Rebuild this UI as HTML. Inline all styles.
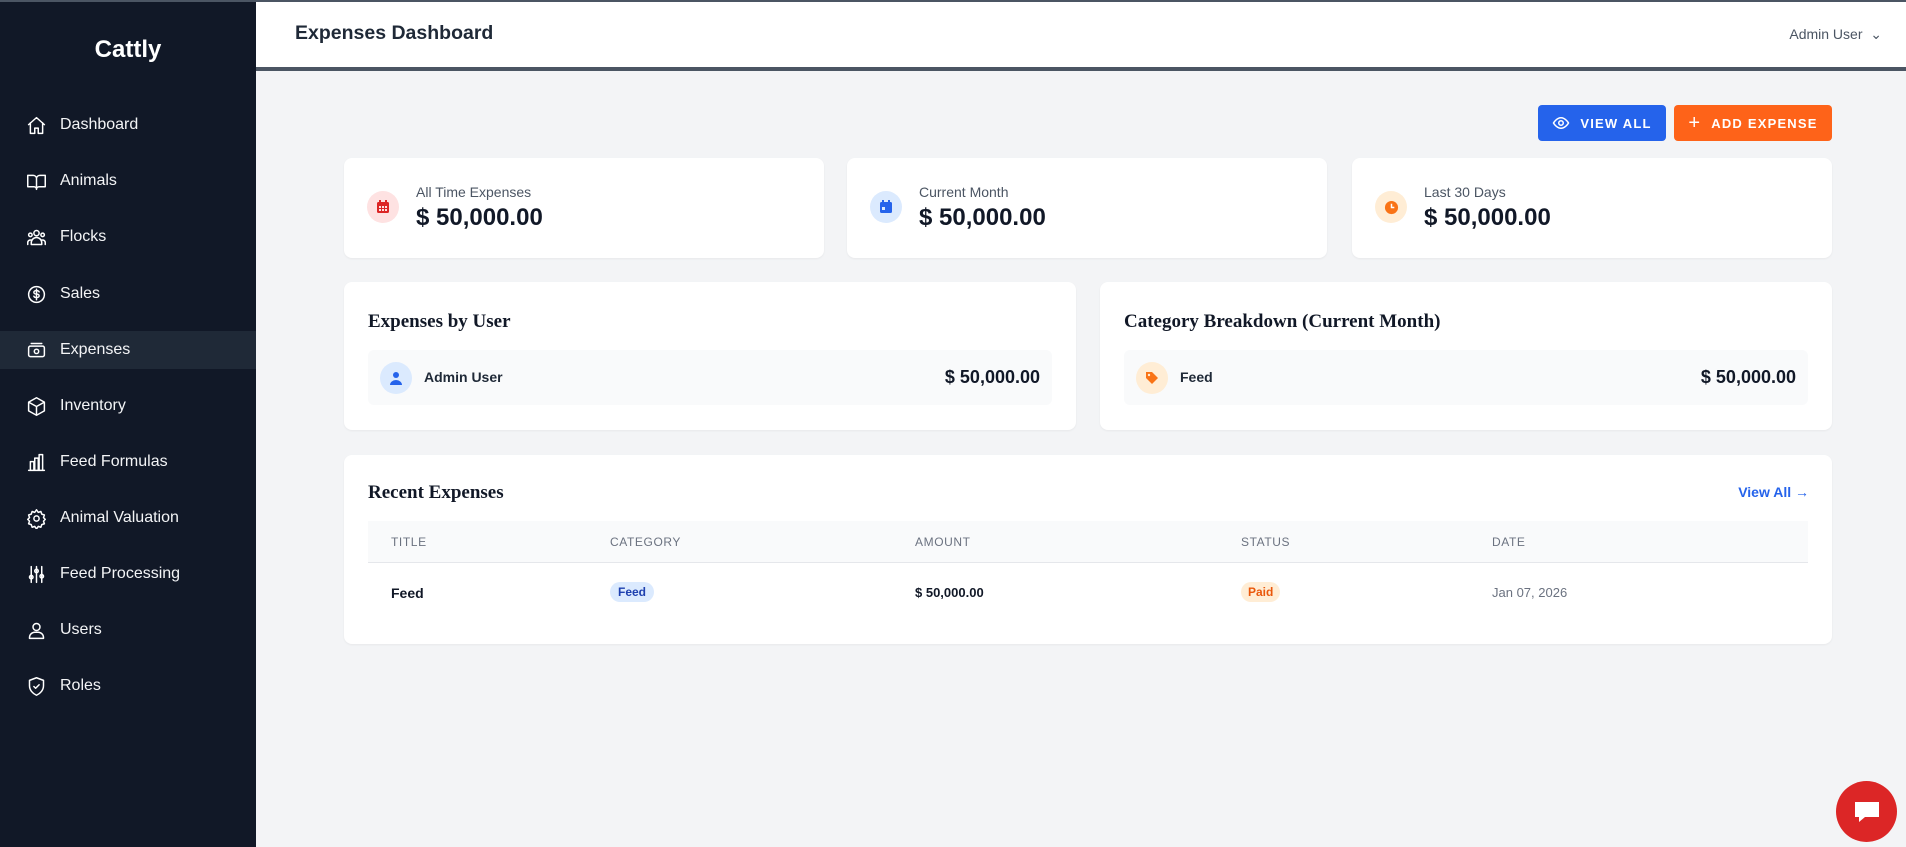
<!DOCTYPE html>
<html><head><meta charset="utf-8"><style>
*{box-sizing:border-box;margin:0;padding:0}
body{width:1906px;height:847px;overflow:hidden;background:#f3f4f6;font-family:"Liberation Sans",sans-serif;position:relative;color:#111827}
.topline{position:absolute;left:0;top:0;width:1906px;height:2px;background:#4b5563;z-index:5}
.side{position:absolute;left:0;top:0;width:256px;height:847px;background:#111827;color:#fff}
.logo{position:absolute;top:36px;width:256px;text-align:center;font-size:24px;font-weight:bold}
.nav{position:absolute;left:0;width:256px;height:38px;display:flex;align-items:center;font-size:16px;color:#f3f4f6}
.nav svg{position:absolute;left:26px;width:21px;height:21px;fill:none;stroke:#fff;stroke-width:1.7;stroke-linecap:round;stroke-linejoin:round}
.nav span{position:absolute;left:60px}
.nav.act{background:#1f2937}
.head{position:absolute;left:256px;top:0;right:0;height:71px;background:#fff;border-bottom:4px solid #4b5563}
.head h1{position:absolute;left:39px;top:22px;font-size:19.5px;font-weight:bold;color:#1f2937}
.user{position:absolute;right:24px;top:26px;font-size:14px;color:#4b5563}
.btn{position:absolute;top:105px;height:36px;border-radius:4px;color:#fff;font-size:13px;font-weight:bold;letter-spacing:1.2px;display:flex;align-items:center;justify-content:center;gap:10px}
.card{position:absolute;background:#fff;border-radius:8px;box-shadow:0 1px 2px rgba(0,0,0,.05)}
.ic{position:absolute;width:32px;height:32px;border-radius:50%;display:flex;align-items:center;justify-content:center}
.lbl{position:absolute;left:72px;top:26px;font-size:14px;color:#4b5563}
.val{position:absolute;left:72px;top:46px;font-size:24px;font-weight:bold}
.ttl{position:absolute;left:24px;top:29px;font-family:"Liberation Serif",serif;font-weight:bold;font-size:19px;color:#111827}
.row{position:absolute;left:24px;right:24px;top:68px;height:55px;background:#f9fafb;border-radius:6px}
.th{position:absolute;top:0;font-size:12px;color:#6b7280;letter-spacing:.6px;line-height:42px}
.td{position:absolute;top:130px;font-size:14px}
</style></head><body>
<div class="topline"></div>
<div class="side">
<div class="logo">Cattly</div>
<div class="nav" style="top:106px"><svg viewBox="0 0 24 24"><path d="M3 11l9-8 9 8M5 9v12h5v-6h4v6h5V9"/></svg><span>Dashboard</span></div>
<div class="nav" style="top:162px"><svg viewBox="0 0 24 24"><path d="M2 5h6a4 4 0 0 1 4 3v13a3 3 0 0 0-3-3H2zM22 5h-6a4 4 0 0 0-4 3v13a3 3 0 0 1 3-3h7z"/></svg><span>Animals</span></div>
<div class="nav" style="top:218px"><svg viewBox="0 0 24 24"><circle cx="12" cy="7" r="3"/><circle cx="5" cy="9" r="2"/><circle cx="19" cy="9" r="2"/><path d="M6 20v-2a6 6 0 0 1 12 0v2zM2 20v-2a3 3 0 0 1 4-3M22 20v-2a3 3 0 0 0-4-3"/></svg><span>Flocks</span></div>
<div class="nav" style="top:275px"><svg viewBox="0 0 24 24"><circle cx="12" cy="12" r="9"/><path d="M15 9a3 2 0 0 0-3-1.5c-2 0-3 1-3 2s1 2 3 2 3 1 3 2-1 2-3 2a3 2 0 0 1-3-1.5M12 6v12"/></svg><span>Sales</span></div>
<div class="nav act" style="top:331px"><svg viewBox="0 0 24 24"><rect x="3" y="7" width="18" height="12" rx="2"/><circle cx="12" cy="13" r="2.5"/><path d="M6 4h12"/></svg><span>Expenses</span></div>
<div class="nav" style="top:387px"><svg viewBox="0 0 24 24"><path d="M12 2l9 5v10l-9 5-9-5V7zM3 7l9 5 9-5M12 12v10"/></svg><span>Inventory</span></div>
<div class="nav" style="top:443px"><svg viewBox="0 0 24 24"><path d="M3 21h18M5 21V11h4v10M10 21V7h4v14M15 21V3h4v18"/></svg><span>Feed Formulas</span></div>
<div class="nav" style="top:499px"><svg viewBox="0 0 24 24"><circle cx="12" cy="12" r="3"/><path d="M12 2l2 3 3-1 1 3 3 1-1 3 2 2-2 2 1 3-3 1-1 3-3-1-2 3-2-3-3 1-1-3-3-1 1-3-2-2 2-2-1-3 3-1 1-3 3 1z"/></svg><span>Animal Valuation</span></div>
<div class="nav" style="top:555px"><svg viewBox="0 0 24 24"><path d="M6 3v18M12 3v18M18 3v18"/><circle cx="6" cy="15" r="2"/><circle cx="12" cy="8" r="2"/><circle cx="18" cy="14" r="2"/></svg><span>Feed Processing</span></div>
<div class="nav" style="top:611px"><svg viewBox="0 0 24 24"><circle cx="12" cy="8" r="4"/><path d="M4 21v-1a6 6 0 0 1 6-6h4a6 6 0 0 1 6 6v1z"/></svg><span>Users</span></div>
<div class="nav" style="top:667px"><svg viewBox="0 0 24 24"><path d="M12 2l8 3v6c0 5-3.5 9-8 11-4.5-2-8-6-8-11V5z"/><path d="M9 12l2 2 4-4"/></svg><span>Roles</span></div>
</div>
<div class="head"><h1>Expenses Dashboard</h1><div class="user">Admin User &nbsp;⌄</div></div>

<div class="btn" style="left:1538px;width:128px;background:#2563eb"><svg width="18" height="18" viewBox="0 0 24 24" fill="none" stroke="#fff" stroke-width="2"><path d="M2 12s4-7 10-7 10 7 10 7-4 7-10 7S2 12 2 12z"/><circle cx="12" cy="12" r="3"/></svg>VIEW ALL</div>
<div class="btn" style="left:1674px;width:158px;background:#fe6319"><span style="font-size:20px;font-weight:normal">+</span>ADD EXPENSE</div>

<div class="card" style="left:344px;top:158px;width:480px;height:100px"><div class="ic" style="left:23px;top:33px;background:#fee2e2"><svg width="14" height="14" viewBox="0 0 14 14"><rect x="1" y="2" width="12" height="11" rx="1.5" fill="#dc2626"/><rect x="3" y="0" width="2" height="3" fill="#dc2626"/><rect x="9" y="0" width="2" height="3" fill="#dc2626"/><g fill="#fee2e2"><rect x="3" y="6" width="2" height="2"/><rect x="6" y="6" width="2" height="2"/><rect x="9" y="6" width="2" height="2"/><rect x="3" y="9" width="2" height="2"/><rect x="6" y="9" width="2" height="2"/><rect x="9" y="9" width="2" height="2"/></g></svg></div><div class="lbl">All Time Expenses</div><div class="val">$ 50,000.00</div></div>
<div class="card" style="left:847px;top:158px;width:480px;height:100px"><div class="ic" style="left:23px;top:33px;background:#dbeafe"><svg width="14" height="14" viewBox="0 0 14 14"><rect x="1" y="2" width="12" height="11" rx="1.5" fill="#2563eb"/><rect x="3" y="0" width="2" height="3" fill="#2563eb"/><rect x="9" y="0" width="2" height="3" fill="#2563eb"/><rect x="3" y="7" width="3" height="3" fill="#dbeafe"/></svg></div><div class="lbl">Current Month</div><div class="val">$ 50,000.00</div></div>
<div class="card" style="left:1352px;top:158px;width:480px;height:100px"><div class="ic" style="left:23px;top:33px;background:#ffedd5"><svg width="15" height="15" viewBox="0 0 16 16"><circle cx="8" cy="8" r="7" fill="#f97316"/><path d="M8 4v4h3" stroke="#fff" stroke-width="1.6" fill="none"/></svg></div><div class="lbl">Last 30 Days</div><div class="val">$ 50,000.00</div></div>

<div class="card" style="left:344px;top:282px;width:732px;height:148px"><div class="ttl">Expenses by User</div><div class="row"><div class="ic" style="left:12px;top:12px;background:#dbeafe"><svg width="14" height="14" viewBox="0 0 14 14" fill="#2563eb"><circle cx="7" cy="4" r="3"/><path d="M1 14a6 5 0 0 1 12 0z"/></svg></div><div style="position:absolute;left:56px;top:19px;font-size:14px;font-weight:bold;color:#1f2937">Admin User</div><div style="position:absolute;right:12px;top:17px;font-size:18px;font-weight:bold">$ 50,000.00</div></div></div>
<div class="card" style="left:1100px;top:282px;width:732px;height:148px"><div class="ttl">Category Breakdown (Current Month)</div><div class="row"><div class="ic" style="left:12px;top:12px;background:#ffedd5"><svg width="14" height="14" viewBox="0 0 14 14"><path d="M1 1h6l6 6-6 6-6-6z" fill="#f97316"/><circle cx="4" cy="4" r="1.2" fill="#ffedd5"/></svg></div><div style="position:absolute;left:56px;top:19px;font-size:14px;font-weight:bold;color:#1f2937">Feed</div><div style="position:absolute;right:12px;top:17px;font-size:18px;font-weight:bold">$ 50,000.00</div></div></div>

<div class="card" style="left:344px;top:455px;width:1488px;height:189px">
<div class="ttl" style="top:27px">Recent Expenses</div>
<div style="position:absolute;right:23px;top:29px;font-size:14px;color:#2563eb;font-weight:bold">View All →</div>
<div style="position:absolute;left:24px;right:24px;top:66px;height:42px;background:#f9fafb;border-bottom:1px solid #e5e7eb">
<div class="th" style="left:23px">TITLE</div><div class="th" style="left:242px">CATEGORY</div><div class="th" style="left:547px">AMOUNT</div><div class="th" style="left:873px">STATUS</div><div class="th" style="left:1124px">DATE</div></div>
<div class="td" style="left:47px;font-weight:bold">Feed</div>
<div style="position:absolute;left:266px;top:127px;padding:3px 8px;border-radius:10px;background:#dbeafe;color:#1e40af;font-size:12px;font-weight:bold">Feed</div>
<div class="td" style="left:571px;font-size:13px;font-weight:bold">$ 50,000.00</div>
<div style="position:absolute;left:897px;top:127px;padding:3px 7px;border-radius:10px;background:#ffedd5;color:#ea580c;font-size:12px;font-weight:bold">Paid</div>
<div class="td" style="left:1148px;color:#6b7280;font-size:13px">Jan 07, 2026</div>
</div>

<div style="position:absolute;left:1836px;top:781px;width:61px;height:61px;border-radius:50%;background:#dc2626;display:flex;align-items:center;justify-content:center"><svg width="28" height="26" viewBox="0 0 28 26"><path d="M2 3h24v15H12l-6 5v-5H2z" fill="#fff"/></svg></div>
</body></html>
